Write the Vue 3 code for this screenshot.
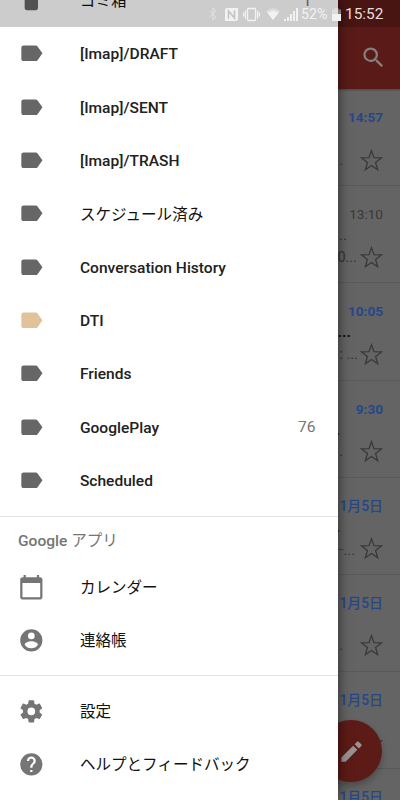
<script setup>
const labels = [
  { name: '[Imap]/DRAFT' },
  { name: '[Imap]/SENT' },
  { name: '[Imap]/TRASH' },
  { name: 'スケジュール済み', jp: true },
  { name: 'Conversation History' },
  { name: 'DTI', tan: true },
  { name: 'Friends' },
  { name: 'GooglePlay', count: 76 },
  { name: 'Scheduled' },
]
const mails = [
  { time: '14:57', subject: '', subjectEnd: 40, snippet: '...', snippetEnd: 17 },
  { time: '13:10', read: true, subject: '...', subjectEnd: 36, snippet: '0...', snippetEnd: 3 },
  { time: '10:05', subject: 's...', subjectEnd: 32, snippet: ': ...', snippetEnd: 2 },
  { time: '9:30', subject: '.', subjectEnd: 43, snippet: '...', snippetEnd: 17 },
  { time: '1月5日', jp: true, subject: '.', subjectEnd: 43, snippet: '─...', snippetEnd: 5 },
  { time: '1月5日', jp: true, subject: '', subjectEnd: 40, snippet: '...', snippetEnd: 17 },
  { time: '1月5日', jp: true, subject: '', subjectEnd: 40, snippet: '', snippetEnd: 17 },
  { time: '1月5日', jp: true, subject: '', subjectEnd: 40, snippet: '', snippetEnd: 17 },
]
</script>

<template>
  <div class="screen">
    <section class="inbox">
      <header class="appbar">
        <svg class="search" viewBox="0 0 24 24"><path d="M15.500 14h-.79l-.28-.27A6.470 6.470 0 0 0 16 9.500 6.500 6.500 0 1 0 9.500 16c1.610 0 3.090-.59 4.230-1.570l.27.28v.79l5 4.990L20.490 19l-4.990-5zm-6 0C7.010 14 5 11.990 5 9.500S7.010 5 9.500 5 14 7.010 14 9.500 11.990 14 9.500 14z" /></svg>
      </header>
      <article v-for="(m, i) in mails" :key="i" class="mail" :class="{ read: m.read }">
        <time :class="{ jp: m.jp }">{{ m.time }}</time>
        <div class="subject" :style="{ paddingRight: m.subjectEnd + 'px' }">{{ m.subject }}</div>
        <div class="foot">
          <span class="snippet" :style="{ paddingRight: m.snippetEnd + 'px' }">{{ m.snippet }}</span>
          <svg class="star" viewBox="0 0 22 22"><path d="M11 1.600 13.400 8.300 20.500 8.500 14.900 12.900 16.900 19.900 11 15.800 5.100 19.900 7.100 12.900 1.500 8.500 8.600 8.300Z" /></svg>
        </div>
      </article>
    </section>

    <button class="fab" aria-label="作成">
      <svg viewBox="0 0 24 24"><path d="M3 17.250V21h3.750L17.200 10.550l-3.750-3.750L3 17.250zM20.710 7.040a1 1 0 0 0 0-1.410l-2.340-2.340a1 1 0 0 0-1.410 0l-2.200 2.200 3.750 3.750 2.200-2.200z" /></svg>
    </button>

    <nav class="drawer">
      <div class="row trash">
        <svg class="icon" viewBox="0 0 24 24"><path d="M6 19c0 1.100.9 2 2 2h8c1.100 0 2-.9 2-2V7H6v12zM19 4h-3.500l-1-1h-5l-1 1H5v2h14V4z" /></svg>
        <span class="name jp">ゴミ箱</span>
        <span class="count">1</span>
      </div>
      <div v-for="l in labels" :key="l.name" class="row">
        <svg class="icon" :class="{ tan: l.tan }" viewBox="0 0 24 24"><path d="M17.630 5.840C17.270 5.330 16.670 5 16 5L5 5.010C3.900 5.010 3 5.900 3 7v10c0 1.100.9 1.990 2 1.990L16 19c.67 0 1.270-.33 1.630-.84L22 12l-4.370-6.160z" /></svg>
        <span class="name" :class="{ jp: l.jp }">{{ l.name }}</span>
        <span v-if="l.count" class="count">{{ l.count }}</span>
      </div>
      <div class="group apps">
        <h2>Google <span>アプリ</span></h2>
        <div class="row">
          <svg class="icon soft" viewBox="0 0 24 24"><path d="M20 3h-1V1h-2v2H7V1H5v2H4c-1.100 0-2 .9-2 2v16c0 1.100.9 2 2 2h16c1.100 0 2-.9 2-2V5c0-1.100-.9-2-2-2zm0 18H4V8h16v13z" /></svg>
          <span class="name jp">カレンダー</span>
        </div>
        <div class="row">
          <svg class="icon soft" viewBox="0 0 24 24"><path d="M12 2a10 10 0 1 0 0 20 10 10 0 0 0 0-20zm0 3a3 3 0 1 1 0 6 3 3 0 0 1 0-6zm0 14.200a7.200 7.200 0 0 1-6-3.220c.03-1.990 4-3.080 6-3.080s5.970 1.090 6 3.080a7.200 7.200 0 0 1-6 3.220z" /></svg>
          <span class="name jp">連絡帳</span>
        </div>
      </div>
      <div class="group">
        <div class="row">
          <svg class="icon soft" viewBox="0 0 24 24"><path d="M19.430 12.980c.04-.32.07-.64.07-.98s-.03-.66-.07-.98l2.110-1.650c.19-.15.24-.42.12-.64l-2-3.460c-.12-.22-.39-.3-.61-.22l-2.490 1c-.52-.4-1.080-.73-1.690-.98l-.38-2.650A.488.488 0 0 0 14 2h-4c-.25 0-.46.18-.49.42l-.38 2.650c-.61.25-1.170.59-1.690.98l-2.490-1c-.23-.09-.49 0-.61.22l-2 3.460c-.13.22-.07.49.12.64l2.110 1.650c-.04.32-.07.65-.07.98s.03.66.07.98l-2.110 1.650c-.19.15-.24.42-.12.64l2 3.460c.12.22.39.3.61.22l2.490-1c.52.4 1.080.73 1.690.98l.38 2.650c.03.24.24.42.49.42h4c.25 0 .46-.18.49-.42l.38-2.650c.61-.25 1.170-.59 1.690-.98l2.490 1c.23.09.49 0 .61-.22l2-3.460c.12-.22.07-.49-.12-.64l-2.110-1.650zM12 15.500a3.500 3.500 0 1 1 0-7 3.500 3.500 0 0 1 0 7z" /></svg>
          <span class="name jp">設定</span>
        </div>
        <div class="row">
          <svg class="icon soft" viewBox="0 0 24 24"><path d="M12 2a10 10 0 1 0 0 20 10 10 0 0 0 0-20zm1 17h-2v-2h2v2zm2.070-7.750-.9.920C13.450 12.900 13 13.500 13 15h-2v-.5c0-1.100.45-2.100 1.170-2.830l1.240-1.260c.37-.36.59-.86.59-1.410a2 2 0 1 0-4 0H8a4 4 0 1 1 8 0c0 .88-.36 1.680-.93 2.250z" /></svg>
          <span class="name jp">ヘルプとフィードバック</span>
        </div>
      </div>
    </nav>

    <div class="status">
      <svg class="bt" viewBox="0 0 10 14"><path d="M1.500 3.800 8 10.200 5 13V1l3 2.800-6.500 6.400" /></svg>
      <svg class="nfc" viewBox="0 0 13 13"><path d="M1.500 0H13v11.500L11.500 13H0V1.500z" /><path class="cut" d="M3.500 10.800V3L9.500 10V2.200" /></svg>
      <svg class="vib" viewBox="0 0 17 14"><rect x="4.500" y="1" width="8" height="12" rx="1" /><path d="M2.500 3v8M.6 5v4M14.500 3v8M16.400 5v4" /></svg>
      <svg class="wifi" viewBox="0 0 14 12"><path class="dim" d="M0 3.200Q7-2.800 14 3.200L7 12z" /><path d="M1.500 5Q7 .8 12.500 5L7 12z" /></svg>
      <svg class="signal" viewBox="0 0 14 13"><path d="M0 11h2v2H0zM3 9h2v4H3zM6 6h2v7H6zM9 3h2v10H9zM12 0h2v13h-2z" /></svg>
      <span class="pct">52%</span>
      <svg class="battery" viewBox="0 0 9 13"><path class="dim" d="M2.500 0h4v1.500H9V6H0V1.500h2.500z" /><path d="M0 6h9v7H0z" /></svg>
      <span class="clock">15:52</span>
    </div>
  </div>
</template>

<style>
body {
  margin: 0;
  overflow: hidden;
}
</style>

<style scoped>
.screen {
  position: relative;
  width: 400px;
  height: 800px;
  overflow: hidden;
  background: #646464;
  font-family: Roboto, "Noto Sans CJK JP", sans-serif;
}
.inbox {
  display: flex;
  flex-direction: column;
}
.appbar {
  box-sizing: border-box;
  flex: none;
  display: flex;
  justify-content: flex-end;
  height: 89px;
  padding: 44px 13px 0 0;
  background: #5a1b18;
  box-shadow: 0 1px 2px rgba(0, 0, 0, 0.3);
}
.search {
  width: 27px;
  height: 27px;
  fill: #848180;
}
.mail {
  box-sizing: border-box;
  flex: none;
  height: 97.200px;
  padding: 17px 17px 0 0;
  border-bottom: 1px solid #595959;
  text-align: right;
  color: #111;
}
.mail time {
  display: block;
  height: 22px;
  font-size: 13.600px;
  line-height: 22px;
  font-weight: 700;
  color: #25478a;
}
.mail time.jp {
  font-size: 13.900px;
  font-weight: 500;
}
.mail.read time {
  font-weight: 400;
  color: #383838;
}
.subject {
  height: 20px;
  font-size: 15.500px;
  line-height: 20px;
  font-weight: 700;
}
.read .subject {
  font-weight: 400;
  color: #333;
}
.foot {
  display: flex;
  justify-content: flex-end;
  align-items: center;
  height: 24px;
}
.snippet {
  font-size: 14.500px;
  color: #333;
  white-space: nowrap;
}
.star {
  width: 23px;
  height: 23px;
  fill: none;
  stroke: #383838;
  stroke-width: 1.200;
}
.fab {
  position: absolute;
  left: 320px;
  top: 720px;
  display: flex;
  align-items: center;
  justify-content: center;
  width: 62px;
  height: 62px;
  padding: 0;
  border: 0;
  border-radius: 50%;
  background: #5d1b17;
  box-shadow: 0 4px 7px rgba(0, 0, 0, 0.25);
}
.fab svg {
  width: 27px;
  height: 27px;
  fill: #959393;
}
.drawer {
  position: absolute;
  left: 0;
  top: 0;
  width: 337.500px;
  height: 800px;
  overflow: hidden;
  background: #fff;
  box-shadow: 0 0 12px rgba(0, 0, 0, 0.6);
}
.row {
  display: flex;
  align-items: center;
  height: 53.330px;
  padding: 0 22px 0 17.700px;
}
.trash {
  margin-top: -26.300px;
}
.trash .count {
  padding-right: 4px;
}
.icon {
  flex: none;
  width: 26.670px;
  height: 26.670px;
  margin-right: 35.600px;
  fill: #666;
}
.icon.soft {
  fill: #757575;
}
.icon.tan {
  fill: #e0c39b;
}
.name {
  flex: 1;
  padding-top: 1.500px;
  font-size: 15.560px;
  font-weight: 500;
  line-height: 24px;
  color: #212121;
  white-space: nowrap;
}
.name.jp {
  padding-top: 2px;
  font-weight: 400;
  color: #111;
}
.count {
  padding-top: 1px;
  font-size: 15.560px;
  color: #757575;
}
.group {
  padding-top: 8px;
  border-top: 1px solid #e3e3e3;
}
.apps {
  margin-top: 8.700px;
  padding-top: 0;
  padding-bottom: 8.500px;
}
h2 {
  height: 43.500px;
  margin: 0;
  padding-left: 18px;
  font-size: 15.560px;
  font-weight: 500;
  line-height: 48px;
  color: #757575;
}
h2 span {
  font-weight: 400;
}
.status {
  position: absolute;
  left: 0;
  top: 0;
  box-sizing: border-box;
  display: flex;
  align-items: center;
  width: 400px;
  height: 26.700px;
  padding: 2px 0 0 208px;
  background: rgba(0, 0, 0, 0.2);
  color: #f2f2f2;
  fill: #f2f2f2;
}
.status svg,
.status span {
  flex: none;
}
.bt {
  width: 10px;
  height: 14px;
  margin-right: 7px;
  fill: none;
  stroke: #e2e2e2;
}
.nfc {
  width: 13px;
  height: 13px;
  margin-right: 5px;
}
.cut {
  fill: none;
  stroke: #c4c4c4;
  stroke-width: 1.600;
}
.vib {
  width: 17px;
  height: 15px;
  margin-right: 6px;
  fill: none;
  stroke: #f2f2f2;
  stroke-width: 1.300;
}
.wifi {
  width: 14px;
  height: 12px;
  margin-right: 4px;
}
.signal {
  width: 14px;
  height: 13px;
  margin-right: 3px;
}
.pct {
  width: 31px;
  font-size: 14.200px;
}
.battery {
  width: 9px;
  height: 13px;
  margin-right: 4px;
}
.dim {
  opacity: 0.450;
}
.clock {
  font-size: 15.400px;
  color: #e6dedd;
}
</style>
